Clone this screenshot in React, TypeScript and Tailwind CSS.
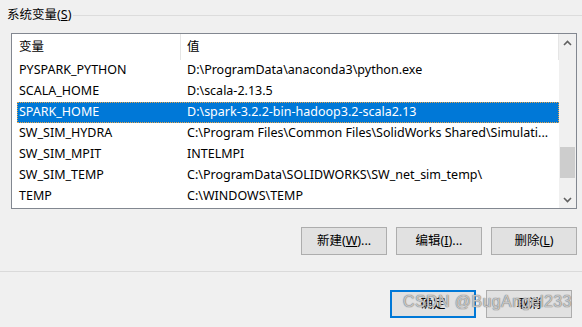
import React from 'react';

interface EnvVar {
  name: string
  value: string
}

const vars: EnvVar[] = [
  { name: 'PYSPARK_PYTHON', value: 'D:\\ProgramData\\anaconda3\\python.exe' },
  { name: 'SCALA_HOME', value: 'D:\\scala-2.13.5' },
  { name: 'SPARK_HOME', value: 'D:\\spark-3.2.2-bin-hadoop3.2-scala2.13' },
  { name: 'SW_SIM_HYDRA', value: 'C:\\Program Files\\Common Files\\SolidWorks Shared\\Simulati...' },
  { name: 'SW_SIM_MPIT', value: 'INTELMPI' },
  { name: 'SW_SIM_TEMP', value: 'C:\\ProgramData\\SOLIDWORKS\\SW_net_sim_temp\\' },
  { name: 'TEMP', value: 'C:\\WINDOWS\\TEMP' },
];

const selected = 'SPARK_HOME';

const Chevron = ({ down }: { down?: boolean }) => (
  <svg width="9" height="6" viewBox="0 0 9 6" className={down ? 'rotate-180' : ''}>
    <path d="M1 5 L4.5 1.5 L8 5" fill="none" stroke="#606060" strokeWidth="1.6" />
  </svg>
);

const Button = ({ children, primary }: { children: React.ReactNode; primary?: boolean }) => (
  <button
    className={
      'h-[28px] w-[86px] bg-[#e1e1e1] text-[12.5px] text-black flex items-center justify-center ' +
      (primary ? 'border-2 border-[#0078d7]' : 'border border-[#adadad]')
    }
  >
    {children}
  </button>
);

const App: React.FC = () => {
  return (
    <div
      className="relative w-[582px] h-[327px] bg-[#f0f0f0] overflow-hidden text-black"
      style={{ fontFamily: '"Noto Sans", "Noto Sans CJK SC", sans-serif' }}
    >
      {/* group title */}
      <div className="flex items-center h-[30px] pl-[7px] pt-[1px]">
        <span className="text-[12.5px] leading-none pr-[2px]">
          系统变量(<u>S</u>)
        </span>
        <div className="flex-1 h-px bg-[#dcdcdc]" />
      </div>

      {/* list view */}
      <div className="ml-[11px] mr-[5px] mt-[3px] h-[176px] border border-[#828790] bg-white flex">
        <div className="flex-1 pl-[5px]">
          <div className="h-[26px] flex items-center text-[12.5px]">
            <div className="w-[164px] pl-[2px] h-full flex items-center border-r border-[#e5e5e5]">变量</div>
            <div className="flex-1 pl-[6px] h-full flex items-center border-r border-[#e5e5e5]">值</div>
          </div>
          {vars.map((v) => {
            const sel = v.name === selected;
            return (
              <div
                key={v.name}
                className={
                  'h-[21px] flex items-center text-[12.5px] whitespace-nowrap ' +
                  (sel ? 'bg-[#0078d7] text-white outline-1 outline-dotted outline-[#e8a54a] -outline-offset-1' : '')
                }
              >
                <div className="w-[164px] pl-[2px]">{v.name}</div>
                <div className="flex-1 pl-[6px] overflow-hidden">{v.value}</div>
              </div>
            );
          })}
        </div>

        {/* scrollbar */}
        <div className="w-[17px] bg-[#f0f0f0] flex flex-col">
          <div className="h-[17px] flex items-center justify-center">
            <Chevron />
          </div>
          <div className="h-[96px]" />
          <div className="h-[31px] mx-[1px] bg-[#cdcdcd]" />
          <div className="flex-1" />
          <div className="h-[17px] flex items-center justify-center">
            <Chevron down />
          </div>
        </div>
      </div>

      {/* edit buttons */}
      <div className="flex justify-end gap-[9px] mt-[18px] pr-[5px]">
        <Button>
          新建(<u>W</u>)...
        </Button>
        <Button>
          编辑(<u>I</u>)...
        </Button>
        <Button>
          删除(<u>L</u>)
        </Button>
      </div>

      <div className="h-px bg-[#dadada] mt-[16px]" />

      {/* dialog buttons */}
      <div className="flex justify-end gap-[10px] mt-[18px] pr-[10px]">
        <Button primary>确定</Button>
        <Button>取消</Button>
      </div>

      {/* watermark */}
      <div
        className="absolute left-[403px] top-[292px] text-[16px] leading-[20px] tracking-[0.4px] whitespace-nowrap text-white/60 pointer-events-none"
        style={{
          fontFamily: '"Liberation Sans", sans-serif',
          textShadow: '0 0 1px #6f6f6f, 0 0 1px #6f6f6f',
        }}
      >
        CSDN @BugAngel233
      </div>
    </div>
  );
};

export default App;
